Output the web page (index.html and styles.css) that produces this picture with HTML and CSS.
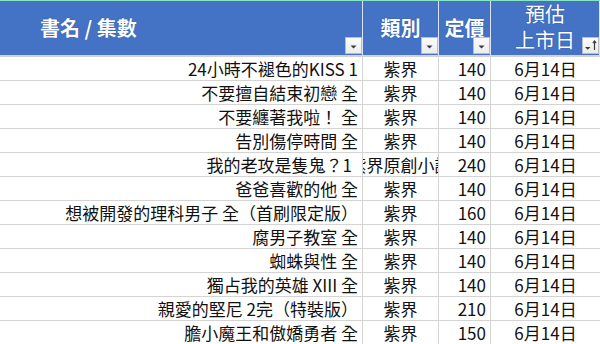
FILE: index.html
```html
<!DOCTYPE html>
<html lang="zh-Hant">
<head>
<meta charset="utf-8">
<link rel="stylesheet" href="styles.css">
</head>
<body>
<div class="sheet">
  <div class="hd hd-title"><span>書名 / 集數</span>
    <span class="dd"><svg viewBox="0 0 17 17" width="17" height="17"><path d="M5.5 8.5h6l-3 3z" fill="#3a3a3a"/></svg></span></div>
  <div class="hd hd-center bold"><span>類別</span>
    <span class="dd"><svg viewBox="0 0 17 17" width="17" height="17"><path d="M5.5 8.5h6l-3 3z" fill="#3a3a3a"/></svg></span></div>
  <div class="hd hd-center bold"><span>定價</span>
    <span class="dd"><svg viewBox="0 0 17 17" width="17" height="17"><path d="M5.5 8.5h6l-3 3z" fill="#3a3a3a"/></svg></span></div>
  <div class="hd hd-center two"><span>預估<br>上市日</span>
    <span class="dd"><svg viewBox="0 0 17 17" width="17" height="17"><path d="M3 10h5.5l-2.75 2.75z" fill="#3a3a3a"/><path d="M12.5 4v9" stroke="#3a3a3a" stroke-width="1.2"/><path d="M10.8 6.2l1.7-2.2 1.7 2.2" stroke="#3a3a3a" stroke-width="1.1" fill="none"/></svg></span></div>

  <div class="c name">24小時不褪色的KISS 1</div><div class="c cat">紫界</div><div class="c price">140</div><div class="c date">6月14日</div>
  <div class="c name">不要擅自結束初戀 全</div><div class="c cat">紫界</div><div class="c price">140</div><div class="c date">6月14日</div>
  <div class="c name">不要纏著我啦！ 全</div><div class="c cat">紫界</div><div class="c price">140</div><div class="c date">6月14日</div>
  <div class="c name">告別傷停時間 全</div><div class="c cat">紫界</div><div class="c price">140</div><div class="c date">6月14日</div>
  <div class="c name name-clip">我的老攻是隻鬼？1</div><div class="c cat"><span>紫界原創小說</span></div><div class="c price">240</div><div class="c date">6月14日</div>
  <div class="c name">爸爸喜歡的他 全</div><div class="c cat">紫界</div><div class="c price">140</div><div class="c date">6月14日</div>
  <div class="c name">想被開發的理科男子 全（首刷限定版）</div><div class="c cat">紫界</div><div class="c price">160</div><div class="c date">6月14日</div>
  <div class="c name">腐男子教室 全</div><div class="c cat">紫界</div><div class="c price">140</div><div class="c date">6月14日</div>
  <div class="c name">蜘蛛與性 全</div><div class="c cat">紫界</div><div class="c price">140</div><div class="c date">6月14日</div>
  <div class="c name">獨占我的英雄 XIII 全</div><div class="c cat">紫界</div><div class="c price">140</div><div class="c date">6月14日</div>
  <div class="c name">親愛的堅尼 2完（特裝版）</div><div class="c cat">紫界</div><div class="c price">210</div><div class="c date">6月14日</div>
  <div class="c name">膽小魔王和傲嬌勇者 全</div><div class="c cat">紫界</div><div class="c price">150</div><div class="c date">6月14日</div>
</div>
</body>
</html>
```
FILE: styles.css
```css
html, body {
  margin: 0;
  padding: 0;
  background: #fff;
  overflow: hidden;
}
body {
  width: 600px;
  height: 344px;
  border-top: 1px solid #86e6c4;
  box-sizing: border-box;
  font-family: "Noto Sans CJK TC", "Noto Sans", sans-serif;
}
.sheet {
  display: grid;
  grid-template-columns: 363px 76px 52px 109px;
  grid-auto-rows: 24px;
  grid-template-rows: 56px;
}
.hd {
  position: relative;
  background: #4472c4;
  color: #fff;
  font-size: 20px;
  display: flex;
  align-items: center;
  border-right: 1px solid #dde4ef;
  border-bottom: 2px solid #d6d2ca;
  text-shadow: 0 0 1px #23468a;
  line-height: 26px;
  padding-bottom: 1px;
}
.hd:last-of-type { border-right: none; }
.hd-title {
  font-weight: 700;
  padding-left: 40px;
}
.hd-center { justify-content: center; }
.bold { font-weight: 700; }
.two { text-align: center; font-weight: 400; padding-bottom: 2px; }
.dd {
  position: absolute;
  right: 0;
  bottom: 1px;
  width: 17px;
  height: 17px;
  background: linear-gradient(#fbfbfb, #ececec);
  border: 1px solid #b9bcc2;
  box-sizing: border-box;
  display: flex;
}
.dd svg { display: block; margin: -1px; }
.c {
  font-size: 17px;
  color: #111;
  display: flex;
  align-items: center;
  border-right: 1px solid #d4d4d4;
  border-bottom: 1px solid #d4d4d4;
  white-space: nowrap;
  overflow: hidden;
  line-height: 23px;
}
.name { justify-content: flex-end; padding-right: 4px; }
.name-clip { padding-right: 10px; }
.cat { justify-content: center; }
.price { justify-content: flex-end; padding-right: 4px; }
.date { justify-content: center; border-right: none; }
```
